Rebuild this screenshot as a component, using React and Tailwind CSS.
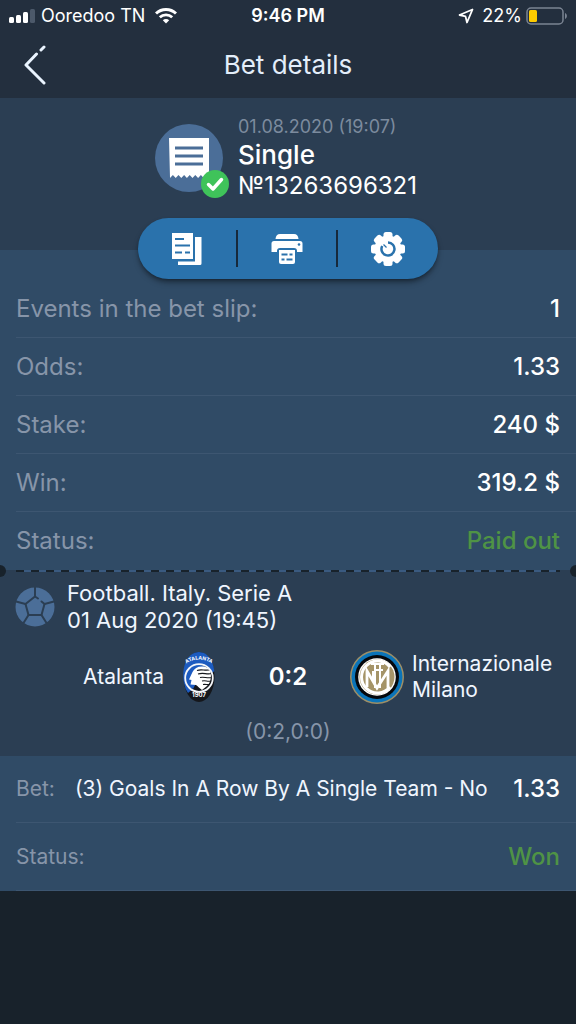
import React from "react";

const details = [
  { label: "Events in the bet slip:", value: "1" },
  { label: "Odds:", value: "1.33" },
  { label: "Stake:", value: "240 $" },
  { label: "Win:", value: "319.2 $" },
  { label: "Status:", value: "Paid out", green: true },
];

const StatusBar = () => (
  <div className="grid grid-cols-[1fr_auto_1fr] items-center h-8 px-2 text-lg leading-6">
    <div className="flex items-center gap-[6px]">
      <svg width="27" height="16" viewBox="0 0 27 16" fill="#fff">
        <rect x="1" y="9" width="5" height="6" rx="1.5" />
        <rect x="8" y="7" width="5" height="8" rx="1.5" />
        <rect x="15" y="4" width="5" height="11" rx="1.5" />
        <rect x="22" y="1" width="5" height="14" rx="1.5" fill="#4c596a" />
      </svg>
      <span>Ooredoo TN</span>
      <svg className="ml-1" width="22" height="16" viewBox="0 0 22 16" fill="none" stroke="#fff">
        <path d="M1 5.5a14.5 14.5 0 0 1 20 0" strokeWidth="3" />
        <path d="M4.8 9.3a9 9 0 0 1 12.4 0" strokeWidth="2.8" />
        <path d="M11 15.5 7.8 12.2a4.6 4.6 0 0 1 6.4 0z" fill="#fff" stroke="none" />
      </svg>
    </div>
    <span className="font-semibold">9:46 PM</span>
    <div className="flex items-center justify-end">
      <svg className="mr-2" width="16" height="16" viewBox="0 0 16 16" fill="none" stroke="#fff" strokeWidth="1.8" strokeLinejoin="round">
        <path d="M14.5 1.5 1.5 7l6 1.4L9 14.5z" />
      </svg>
      <span>22%</span>
      <svg className="ml-1" width="42" height="18" viewBox="0 0 42 18">
        <rect x="1" y="1" width="36" height="16" rx="4" fill="none" stroke="#7b8593" strokeWidth="1.5" />
        <rect x="3" y="3" width="8" height="12" rx="1.5" fill="#fc0" />
        <path d="M39 6c2.5 1 2.5 5 0 6z" fill="#7b8593" />
      </svg>
    </div>
  </div>
);

const ReceiptIcon = () => (
  <svg className="shrink-0" width="76" height="76" viewBox="0 0 76 76" aria-hidden="true">
    <circle cx="34" cy="34" r="34" fill="#4b6e98" />
    <path
      d="M14 14h40v39l-2.5-2-2.8 3-2.8-3-2.8 3-2.8-3-2.8 3-2.8-3-2.8 3-2.8-3-2.8 3-2.8-3-2.8 3-2.8-3-2.9 3z"
      fill="#fff"
    />
    <path d="M20 24h28M20 32h28M20 40h28" stroke="#4b6e98" strokeWidth="3" />
    <circle cx="60" cy="60" r="14" fill="#3fc35a" />
    <path d="m53.500 60.500 4.500 4.500 8.500-9.500" fill="none" stroke="#fff" strokeWidth="3.500" strokeLinecap="round" strokeLinejoin="round" />
  </svg>
);

const CopyIcon = () => (
  <svg width="32" height="34" viewBox="0 0 32 34" fill="#fff">
    <path d="M1 1h21v26H1z" />
    <path d="M24 5h6.500v26.500q0 1.500-1.500 1.500H7v-3.500h17z" />
    <path d="M4 7h9M4 13.500h15M4 20.500h7M14 20.500h5" stroke="#2a72ac" strokeWidth="2" />
  </svg>
);

const PrinterIcon = () => (
  <svg width="32" height="30" viewBox="0 0 32 30" fill="#fff">
    <path d="M9 0h14q4 0 4.500 5h-23Q5 0 9 0z" />
    <path d="M3 7h26q2.500 0 2.500 2.500V18H26v-1q0-3-3-3H9q-3 0-3 3v1H.5V9.500Q.5 7 3 7z" />
    <path d="M8 16h16v12q0 2-2 2H10q-2 0-2-2z" />
    <circle cx="28" cy="10.500" r="1.300" fill="#2a72ac" />
    <path d="M10.500 20.500h6M18.500 20.500h3M10.500 25.500h3M15.500 25.500h6" stroke="#2a72ac" strokeWidth="2" />
  </svg>
);

const GearIcon = () => (
  <svg width="34" height="34" viewBox="-17 -17 34 34" fill="#fff">
    <circle r="13.500" />
    {[0, 45, 90, 135, 180, 225, 270, 315].map((a) => (
      <rect key={a} x="-4.500" y="-17" width="9" height="10" rx="2.500" transform={`rotate(${a})`} />
    ))}
    <path d="M0-6.500A6.500 6.500 0 1 1-5.800-3" fill="none" stroke="#2a72ac" strokeWidth="2.500" />
    <path d="M-4.500-4.500-1.500-1.500" stroke="#2a72ac" strokeWidth="1.200" />
  </svg>
);

const BallIcon = () => (
  <svg className="shrink-0" width="40" height="40" viewBox="0 0 40 40">
    <circle cx="20" cy="20" r="19.500" fill="#4b6e98" />
    <g fill="none" stroke="#2b3e53" strokeWidth="2" strokeLinecap="round" strokeLinejoin="round">
      <path d="M23 11.500 20 9.500 10.500 17 13.500 28h13l3-11-3-2.500" />
      <path d="M20 9.500V0M10.500 17 1 14.500M13.500 28 8.500 36M26.500 28l5 8M29.500 17l9.500-2.500" />
    </g>
  </svg>
);

const AtalantaCrest = () => (
  <svg className="shrink-0" width="54" height="54" viewBox="0 0 54 54" role="img" aria-label="Atalanta">
    <ellipse cx="27" cy="27" rx="15.500" ry="25" fill="#15171c" />
    <path d="M12 33C9 16 16 2 27 2c9 0 14 9 15.300 19L16 43q-3-4-4-10z" fill="#1d5bc0" />
    <circle cx="27" cy="28" r="13.800" fill="#15171c" />
    <path d="M27 14.500a13.500 13.500 0 0 0-9.500 23L21 39l12-23z" fill="#1d5bc0" />
    <path
      d="M36 18c-7-3-13-1-15.500 4L17 29.500l2.500.5-1 4.500 5.500.5c2 1 3 3 6 5l5-4c4-3 6-13 1-18z"
      fill="#fff"
    />
    <path
      d="M25 20.500c5-2 8 1 14-1M26 24c6-2 8 1 14-.5M28 27.500c4-1 7 1 12 0M30 31c4-1 5 1 9 0M31 34.500c3-.5 4 .5 6 0"
      fill="none"
      stroke="#15171c"
      strokeWidth="1.200"
    />
    <circle cx="27" cy="28" r="13.800" fill="none" stroke="#f4f6f9" strokeWidth="1.800" />
    <path id="crest-arc" d="M13.500 14Q27 5 40.500 14" fill="none" />
    <text fill="#fff" fontSize="5" fontWeight="700" textAnchor="middle">
      <textPath href="#crest-arc" startOffset="50%">ATALANTA</textPath>
    </text>
    <text x="27" y="47" fill="#fff" fontSize="6" fontWeight="700" textAnchor="middle">1907</text>
  </svg>
);

const InterCrest = () => (
  <svg className="shrink-0" width="54" height="54" viewBox="0 0 54 54" role="img" aria-label="Internazionale Milano">
    <circle cx="27" cy="27" r="27" fill="#9d8f67" />
    <circle cx="27" cy="27" r="25.500" fill="#0b74b8" />
    <circle cx="27" cy="27" r="22" fill="#05080c" />
    <circle cx="27" cy="27" r="18.800" fill="#fff" />
    <circle cx="27" cy="27" r="17.500" fill="#a59468" />
    <g fill="none" stroke="#fff" strokeWidth="3">
      <path d="M40 17a16 16 0 1 0 0 20" />
      <path d="M17 37V21l10 17 11-17v17" strokeWidth="2.800" />
      <path d="M23 31V21M25 38V13.500M30 38V13.500M21 14h13M25 20h8" strokeWidth="2" />
    </g>
  </svg>
);

const App = () => {
  return (
    <div className="min-h-screen bg-[#18222b] text-white font-['Inter','Liberation_Sans',sans-serif]">
      <header className="bg-[#232f3e]">
        <StatusBar />
        <div className="grid grid-cols-[1fr_auto_1fr] items-center h-[66px] px-4">
          <button type="button" aria-label="Back" className="w-10 pl-2">
            <svg width="24" height="40" viewBox="0 0 24 40" fill="none" stroke="#eaf4ff" strokeWidth="3" strokeLinecap="round" strokeLinejoin="round">
              <path d="m12.500 9-10.500 11L20 38M17 5l3-3" />
            </svg>
          </button>
          <h1 className="text-[26px] leading-8 text-[#e3eefa]">Bet details</h1>
        </div>
      </header>

      <section className="flex justify-center gap-[7px] h-[152px] pt-[17px] pr-1 bg-[#2b3e53]">
        <div className="pt-[9px]">
          <ReceiptIcon />
        </div>
        <div>
          <p className="text-lg leading-6 text-[#7c8b9e]">01.08.2020 (19:07)</p>
          <h2 className="text-[26px] leading-8 font-medium">Single</h2>
          <p className="text-2xl leading-[30px]">№13263696321</p>
        </div>
      </section>

      <section className="flex flex-col bg-[#304b66]">
        <div className="relative -mt-8 self-center grid grid-cols-3 divide-x-2 divide-[#17293b] w-[300px] h-[61px] py-3 rounded-full bg-[#2a72ac] shadow-md shadow-black/40">
          <button type="button" aria-label="Copy" className="flex items-center justify-center">
            <CopyIcon />
          </button>
          <button type="button" aria-label="Print" className="flex items-center justify-center">
            <PrinterIcon />
          </button>
          <button type="button" aria-label="Settings" className="flex items-center justify-center">
            <GearIcon />
          </button>
        </div>
        <dl className="pl-4 pt-px">
          {details.map((item) => (
            <div
              key={item.label}
              className="flex items-center justify-between h-[58px] pr-4 text-2xl border-b border-[#3d5671] last:border-transparent"
            >
              <dt className="text-[#8795a9]">{item.label}</dt>
              <dd className={`font-medium ${item.green ? "text-[#4f9345]" : ""}`}>{item.value}</dd>
            </div>
          ))}
        </dl>
      </section>

      <section className="relative bg-[#2b3e53] pb-2">
        <div className="mx-4 h-[2px] bg-[repeating-linear-gradient(90deg,#18222b_0_8px,#3a5a80_8px_15px)]"></div>
        <span className="absolute -left-[6px] -top-[5px] size-3 rounded-full bg-[#18222b]"></span>
        <span className="absolute -right-[6px] -top-[5px] size-3 rounded-full bg-[#18222b]"></span>

        <div className="flex items-center gap-3 pl-[15px] pt-2 text-[22px] leading-[27px] text-[#f0f6ff]">
          <BallIcon />
          <div>
            <p>Football. Italy. Serie A</p>
            <p>01 Aug 2020 (19:45)</p>
          </div>
        </div>

        <div className="grid grid-cols-[1fr_124px_1fr] items-center pt-4 text-[21px] leading-[26px] text-[#f0f6ff]">
          <div className="flex items-center justify-end gap-2">
            <span>Atalanta</span>
            <AtalantaCrest />
          </div>
          <p className="text-center text-2xl font-semibold text-white">0:2</p>
          <div className="flex items-center gap-2 pr-4">
            <InterCrest />
            <span>Internazionale Milano</span>
          </div>
        </div>
        <p className="pt-3 text-center text-[21px] leading-8 text-[#8795a9]">(0:2,0:0)</p>
      </section>

      <section className="bg-[#304b66] pl-4">
        <div className="flex items-center h-[67px] pr-4 border-b border-[#3d5671]">
          <span className="text-[21px] text-[#8795a9]">Bet:</span>
          <span className="ml-5 text-[21px] text-[#f0f6ff]">(3) Goals In A Row By A Single Team - No</span>
          <span className="ml-auto text-2xl font-medium">1.33</span>
        </div>
        <div className="flex items-center justify-between h-[68px] pr-4 border-b border-[#3d5671]">
          <span className="text-[21px] text-[#8795a9]">Status:</span>
          <span className="text-2xl font-medium text-[#4f9345]">Won</span>
        </div>
      </section>
    </div>
  );
};

export default App;
